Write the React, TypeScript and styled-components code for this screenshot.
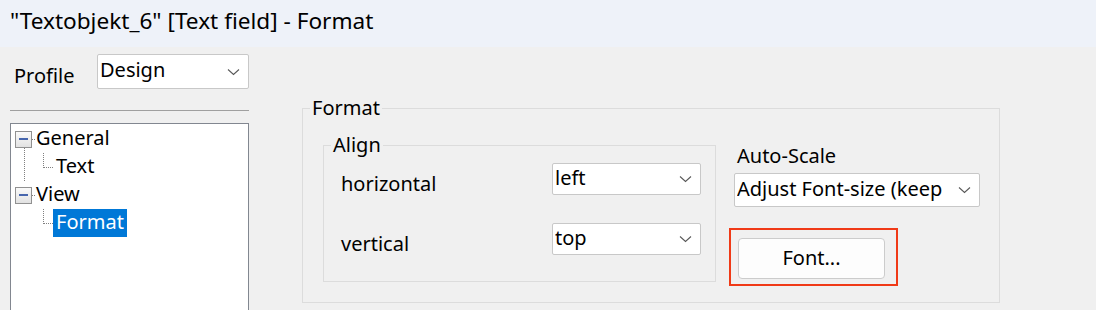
import styled, { createGlobalStyle } from 'styled-components';

const GlobalStyle = createGlobalStyle`
    html, body {
        margin: 0;
        padding: 0;
        background: #f0f0f0;
        overflow: hidden;
    }
    body {
        font-family: 'Noto Sans', 'Open Sans', sans-serif;
        font-size: 20px;
        color: #000;
    }
`;

const Window = styled.div`
    width: 1096px;
    height: 310px;
    overflow: hidden;
    background: #f0f0f0;
`;

const TitleBar = styled.div`
    height: 47px;
    background: #eef2f9;
    padding-left: 10px;
    font-size: 22.6px;
    line-height: 42px;
    white-space: nowrap;
`;

const Body = styled.div`
    display: flex;
    padding-left: 10px;
`;

const Sidebar = styled.div`
    width: 239px;
    display: flex;
    flex-direction: column;
`;

const ProfileRow = styled.div`
    display: flex;
    align-items: center;
    margin-top: 7px;
`;

const ProfileLabel = styled.span`
    width: 83px;
    padding-left: 4px;
    padding-top: 9px;
    line-height: 20px;
`;

const Combo = styled.div<{ $width: number; $height: number }>`
    box-sizing: border-box;
    width: ${p => p.$width}px;
    height: ${p => p.$height}px;
    background: #fff;
    border: 1px solid #c8c8c8;
    border-radius: 2px;
    display: flex;
    align-items: center;
    padding: 0 8px 3px 2px;
    white-space: nowrap;
    overflow: hidden;
`;

const ComboText = styled.span`
    flex: 1;
    overflow: hidden;
    line-height: 26px;
    margin-right: 12px;
`;

const Chevron = () => (
    <svg width='13' height='8' viewBox='0 0 13 8' style={{ flex: 'none', marginTop: 3 }}>
        <path d='M1 1.5 L6.5 6.5 L12 1.5' fill='none' stroke='#5a5a5a' strokeWidth='1.1' />
    </svg>
);

const Separator = styled.div`
    margin-top: 21px;
    border-top: 1px solid #a0a0a0;
`;

const Tree = styled.div`
    margin-top: 12px;
    height: 200px;
    background: #fff;
    border: 1px solid #828790;
    padding-top: 1px;
    line-height: 28px;
`;

const TreeNode = styled.div`
    position: relative;
    &:first-child::before {
        content: '';
        position: absolute;
        left: 13px;
        top: 23px;
        height: 33px;
        border-left: 1px dotted #808080;
    }
`;

const Row = styled.div`
    display: flex;
    align-items: center;
    height: 28px;
`;

const ExpandBox = styled.span`
    box-sizing: border-box;
    width: 17px;
    height: 17px;
    margin-left: 4px;
    border: 1px solid #919191;
    background: linear-gradient(#fafafa, #e2e2e2);
    display: flex;
    align-items: center;
    justify-content: center;
    &::after {
        content: '';
        width: 9px;
        height: 2px;
        background: #4766ad;
    }
`;

const Stub = styled.span`
    width: 3px;
    margin-right: -2px;
    border-top: 1px dotted #808080;
`;

const Connector = styled.span`
    align-self: flex-start;
    width: 9px;
    height: 14px;
    margin-left: 32px;
    border-left: 1px dotted #808080;
    border-bottom: 1px dotted #808080;
`;

const NodeLabel = styled.span<{ $selected?: boolean }>`
    padding: 0 3px 0 ${p => (p.$selected ? 3 : 0)}px;
    margin-left: ${p => (p.$selected ? 0 : 3)}px;
    height: 28px;
    line-height: 26px;
    background: ${p => (p.$selected ? '#0078d7' : 'transparent')};
    color: ${p => (p.$selected ? '#fff' : '#000')};
`;

const Content = styled.div`
    margin-left: 53px;
`;

const Group = styled.fieldset<{ $width: number; $height: number }>`
    box-sizing: border-box;
    width: ${p => p.$width}px;
    height: ${p => p.$height}px;
    margin: 0;
    padding: 0;
    border: 1px solid #dcdcdc;
    min-width: 0;
`;

const Legend = styled.legend`
    margin-left: 7px;
    padding: 0 2px;
    line-height: 20px;
`;

const OuterGroup = styled(Group)`
    margin-top: 51px;
`;

const GroupBody = styled.div`
    display: flex;
    padding-left: 20px;
`;

const AlignGroup = styled(Group)`
    margin-top: 17px;
`;

const AlignRow = styled.div`
    display: flex;
    align-items: center;
    padding-left: 17px;
    margin-top: 8px;
    & + & {
        margin-top: 28px;
    }
`;

const AlignLabel = styled.span`
    width: 211px;
    padding-top: 9px;
    line-height: 20px;
`;

const ScaleColumn = styled.div`
    margin-left: 18px;
    margin-top: 28px;
    display: flex;
    flex-direction: column;
`;

const ScaleLabel = styled.span`
    padding-left: 3px;
    line-height: 20px;
    margin-bottom: 7px;
`;

const Highlight = styled.div`
    margin-top: 21px;
    margin-left: -5px;
    width: 169px;
    height: 58px;
    box-sizing: border-box;
    border: 2px solid #f03a17;
    padding: 8px 0 0 7px;
`;

const Button = styled.button`
    box-sizing: border-box;
    width: 147px;
    height: 41px;
    background: #fdfdfd;
    border: 1px solid #cccccc;
    border-radius: 4px;
    font-family: inherit;
    font-size: 20px;
    color: #000;
    padding: 0 0 3px;
`;

export default function App() {
    return (
        <Window>
            <GlobalStyle />
            <TitleBar>"Textobjekt_6" [Text field] - Format</TitleBar>
            <Body>
                <Sidebar>
                    <ProfileRow>
                        <ProfileLabel>Profile</ProfileLabel>
                        <Combo $width={152} $height={35}>
                            <ComboText>Design</ComboText>
                            <Chevron />
                        </Combo>
                    </ProfileRow>
                    <Separator />
                    <Tree>
                        <TreeNode>
                            <Row>
                                <ExpandBox />
                                <Stub />
                                <NodeLabel>General</NodeLabel>
                            </Row>
                            <Row>
                                <Connector />
                                <NodeLabel>Text</NodeLabel>
                            </Row>
                        </TreeNode>
                        <TreeNode>
                            <Row>
                                <ExpandBox />
                                <Stub />
                                <NodeLabel>View</NodeLabel>
                            </Row>
                            <Row>
                                <Connector />
                                <NodeLabel $selected>Format</NodeLabel>
                            </Row>
                        </TreeNode>
                    </Tree>
                </Sidebar>
                <Content>
                    <OuterGroup $width={698} $height={205}>
                        <Legend>Format</Legend>
                        <GroupBody>
                            <AlignGroup $width={393} $height={147}>
                                <Legend>Align</Legend>
                                <AlignRow>
                                    <AlignLabel>horizontal</AlignLabel>
                                    <Combo $width={149} $height={32}>
                                        <ComboText>left</ComboText>
                                        <Chevron />
                                    </Combo>
                                </AlignRow>
                                <AlignRow>
                                    <AlignLabel>vertical</AlignLabel>
                                    <Combo $width={149} $height={32}>
                                        <ComboText>top</ComboText>
                                        <Chevron />
                                    </Combo>
                                </AlignRow>
                            </AlignGroup>
                            <ScaleColumn>
                                <ScaleLabel>Auto-Scale</ScaleLabel>
                                <Combo $width={246} $height={34}>
                                    <ComboText>Adjust Font-size (keep proportions)</ComboText>
                                    <Chevron />
                                </Combo>
                                <Highlight>
                                    <Button>Font...</Button>
                                </Highlight>
                            </ScaleColumn>
                        </GroupBody>
                    </OuterGroup>
                </Content>
            </Body>
        </Window>
    );
}
